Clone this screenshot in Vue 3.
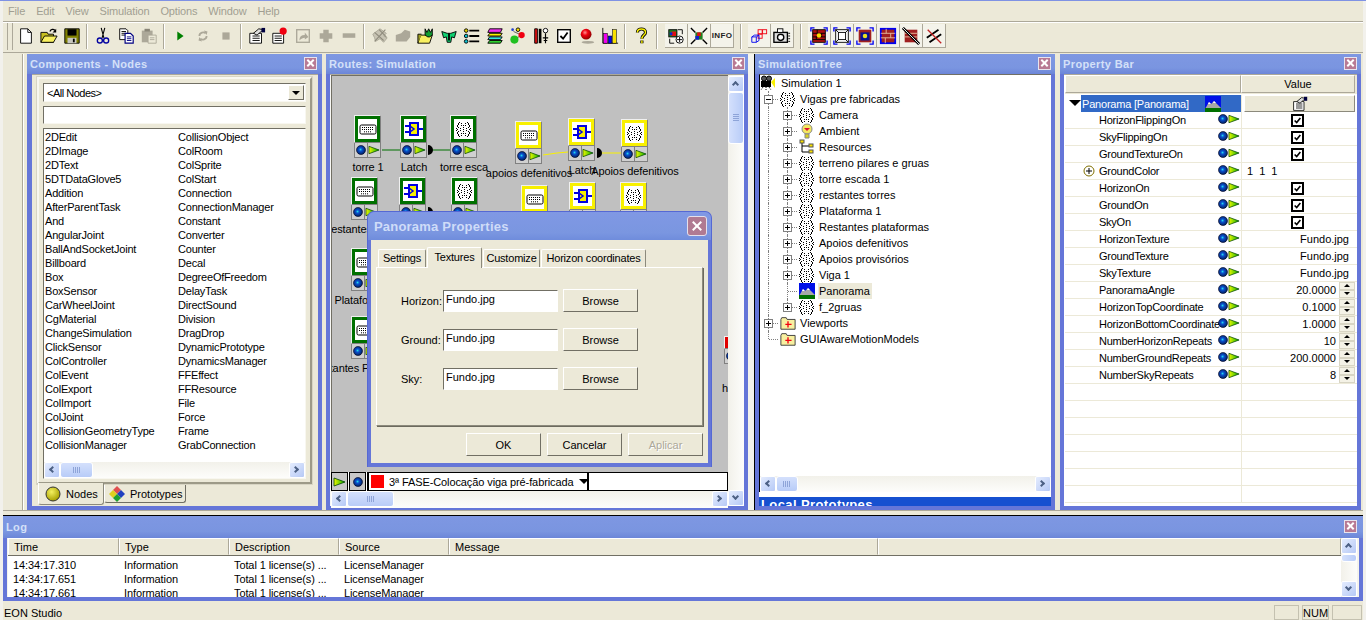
<script setup>
const menus = ['File', 'Edit', 'View', 'Simulation', 'Options', 'Window', 'Help']
const toolGroups = [
  ['new', 'open', 'save'],
  ['cut', 'copy', 'paste'],
  ['play', 'loop', 'stop'],
  ['props', 'propred', 'jump', 'plus', 'minus'],
  ['gr1', 'gr2', 'foldbug', 'bug', 'list', 'layers', 'mol', 'tune', 'check', 'redball', 'bars'],
  ['help'],
]
const raisedGroups = [
  ['wire1', 'wire2', 'info'],
  ['cube', 'cam'],
  ['r1', 'r2', 'r3', 'r4', 'r5', 'r6'],
]
const nodesA = ['2DEdit', '2DImage', '2DText', '5DTDataGlove5', 'Addition', 'AfterParentTask', 'And', 'AngularJoint', 'BallAndSocketJoint', 'Billboard', 'Box', 'BoxSensor', 'CarWheelJoint', 'CgMaterial', 'ChangeSimulation', 'ClickSensor', 'ColController', 'ColEvent', 'ColExport', 'ColImport', 'ColJoint', 'CollisionGeometryType', 'CollisionManager']
const nodesB = ['CollisionObject', 'ColRoom', 'ColSprite', 'ColStart', 'Connection', 'ConnectionManager', 'Constant', 'Converter', 'Counter', 'Decal', 'DegreeOfFreedom', 'DelayTask', 'DirectSound', 'Division', 'DragDrop', 'DynamicPrototype', 'DynamicsManager', 'FFEffect', 'FFResource', 'File', 'Force', 'Frame', 'GrabConnection']

// dotted group icon, one pixel per # on a 15x15 grid
const grpMap = [
  '...#.......#...',
  '..#..#...#..#..',
  '..#.........#..',
  '.#...#.#.#...#.',
  '.#...........#.',
  '..#....#....#..',
  '#...#.....#...#',
  '.#.....#.....#.',
  '#...#.....#...#',
  '..#....#....#..',
  '.#...........#.',
  '.#...#.#.#...#.',
  '..#.........#..',
  '..#..#...#..#..',
  '...#.......#...',
]
const grpPath = grpMap.map((row, y) => [...row].map((c, x) => (c === '#' ? `M${x} ${y}h1v1h-1z` : '')).join('')).join('')

const routeNodes = [
  { x: 354, y: 115, c: 'green', i: 'kbd', label: 'torre 1', ly: 167 },
  { x: 400, y: 115, c: 'green', i: 'latch', label: 'Latch', ly: 167 },
  { x: 450, y: 115, c: 'green', i: 'grp', label: 'torre esca', ly: 167 },
  { x: 351, y: 177, c: 'green', i: 'kbd', label: 'restantes torres', ly: 229 },
  { x: 399, y: 177, c: 'green', i: 'latch', label: '', ly: 229 },
  { x: 451, y: 177, c: 'green', i: 'grp', label: '', ly: 229 },
  { x: 351, y: 248, c: 'green', i: 'kbd', label: 'Plataforma 1', ly: 300 },
  { x: 351, y: 316, c: 'green', i: 'kbd', label: 'Restantes Plataformas', ly: 368 },
  { x: 515, y: 121, c: 'yellow', i: 'kbd', label: 'apoios defenitivos', ly: 173 },
  { x: 568, y: 118, c: 'yellow', i: 'latch', label: 'Latch', ly: 170 },
  { x: 621, y: 119, c: 'yellow', i: 'grp', label: 'Apoios defenitivos', ly: 171 },
  { x: 521, y: 185, c: 'yellow', i: 'kbd', label: '', ly: 237 },
  { x: 569, y: 182, c: 'yellow', i: 'latch', label: '', ly: 234 },
  { x: 620, y: 182, c: 'yellow', i: 'grp', label: '', ly: 234 },
  { x: 724, y: 336, c: 'red', i: 'kbd', label: '', ly: 388 },
]
const canvasX = 332
const canvasY = 76
const nodeStyle = n => ({ left: n.x - canvasX + 'px', top: n.y - canvasY + 'px' })
const labelStyle = n => ({ left: n.x + 14 - canvasX + 'px', top: n.ly - 7 - canvasY + 'px' })

const treeRows = [
  { t: 'Camera', i: 'grp', box: true },
  { t: 'Ambient', i: 'bulb', box: true },
  { t: 'Resources', i: 'res', box: true },
  { t: 'terreno pilares e gruas', i: 'grp', box: true },
  { t: 'torre escada 1', i: 'grp', box: true },
  { t: 'restantes torres', i: 'grp', box: true },
  { t: 'Plataforma 1', i: 'grp', box: true },
  { t: 'Restantes plataformas', i: 'grp', box: true },
  { t: 'Apoios defenitivos', i: 'grp', box: true },
  { t: 'Apoios provisórios', i: 'grp', box: true },
  { t: 'Viga 1', i: 'grp', box: true },
  { t: 'Panorama', i: 'pano', box: false, sel: true },
  { t: 'f_2gruas', i: 'grp', box: true, last: true },
]

const props = [
  { n: 'HorizonFlippingOn', k: 'chk' },
  { n: 'SkyFlippingOn', k: 'chk' },
  { n: 'GroundTextureOn', k: 'chk' },
  { n: 'GroundColor', k: 'txt', v: '1 1 1', plus: true },
  { n: 'HorizonOn', k: 'chk' },
  { n: 'GroundOn', k: 'chk' },
  { n: 'SkyOn', k: 'chk' },
  { n: 'HorizonTexture', k: 'file', v: 'Fundo.jpg' },
  { n: 'GroundTexture', k: 'file', v: 'Fundo.jpg' },
  { n: 'SkyTexture', k: 'file', v: 'Fundo.jpg' },
  { n: 'PanoramaAngle', k: 'num', v: '20.0000' },
  { n: 'HorizonTopCoordinate', k: 'num', v: '0.1000' },
  { n: 'HorizonBottomCoordinate', k: 'num', v: '1.0000' },
  { n: 'NumberHorizonRepeats', k: 'num', v: '10' },
  { n: 'NumberGroundRepeats', k: 'num', v: '200.0000' },
  { n: 'NumberSkyRepeats', k: 'num', v: '8' },
  {}, {}, {}, {}, {}, {}, {},
]

const logCols = ['Time', 'Type', 'Description', 'Source', 'Message']
const logRows = ['14:34:17.310', '14:34:17.651', '14:34:17.661']
const textures = ['Horizon:', 'Ground:', 'Sky:']
</script>

<template>
  <svg class="defs" width="0" height="0">
    <defs>
      <radialGradient id="ballg" cx="45%" cy="45%" r="60%">
        <stop offset="0" stop-color="#20e0e8" />
        <stop offset=".3" stop-color="#0a50d0" />
        <stop offset="1" stop-color="#001a50" />
      </radialGradient>
      <linearGradient id="arrg" x1="0" x2="1" y1="0" y2="0">
        <stop offset="0" stop-color="#f0f800" />
        <stop offset="1" stop-color="#00b000" />
      </linearGradient>
      <radialGradient id="redg" cx="40%" cy="35%" r="65%">
        <stop offset="0" stop-color="#ff9090" />
        <stop offset=".4" stop-color="#f00010" />
        <stop offset="1" stop-color="#900000" />
      </radialGradient>
      <radialGradient id="olive" cx="40%" cy="35%" r="65%">
        <stop offset="0" stop-color="#f4f060" />
        <stop offset="1" stop-color="#a8a000" />
      </radialGradient>
    </defs>
    <symbol id="ball" viewBox="0 0 10 10"><circle cx="5" cy="5" r="4.5" fill="url(#ballg)" stroke="#002" stroke-width=".6" /></symbol>
    <symbol id="arrow" viewBox="0 0 13 10"><path d="M1 1 L12 5 L1 9 Z" fill="url(#arrg)" stroke="#040" stroke-width=".8" /></symbol>
    <symbol id="kbd" viewBox="0 0 20 20"><rect x="2" y="6" width="16" height="9" rx="1.5" fill="#fff" stroke="#000" /><path d="M4 8.5h12M4 10.5h12M6 12.8h8" stroke="#000" stroke-dasharray="1 1" fill="none" /></symbol>
    <symbol id="latch" viewBox="0 0 20 20"><rect x="6" y="4" width="8" height="12" fill="#f8f000" stroke="#0000e0" stroke-width="2" /><path d="M1 7h5M1 13h5M14 10h5" stroke="#0000e0" stroke-width="2" /><path d="M6 7l4 3-4 3" fill="none" stroke="#0000e0" stroke-width="1.5" /></symbol>
    <symbol id="grp" viewBox="0 0 15 15"><path :d="grpPath" fill="#000" shape-rendering="crispEdges" /></symbol>
    <symbol id="bulb" viewBox="0 0 16 16"><circle cx="8" cy="6" r="5" fill="#f4e860" stroke="#888" /><path d="M6 11h4v4H6z" fill="#d8d020" stroke="#888" /><path d="M5 5h6L8 8z" fill="#e01030" /></symbol>
    <symbol id="res" viewBox="0 0 16 16"><path d="M3 4v9h7M3 7h7" fill="none" stroke="#000" /><rect x="1" y="1" width="4" height="3" fill="#f8e000" stroke="#555" /><rect x="10" y="5" width="4" height="3" fill="#f8e000" stroke="#555" /><rect x="10" y="11" width="4" height="3" fill="#f8e000" stroke="#555" /></symbol>
    <symbol id="pano" viewBox="0 0 16 16"><rect width="16" height="16" fill="#0010e8" /><path d="M0 13L4 6l2 2 3-3 3 3 4 4v2z" fill="#a8a8a8" /><path d="M3 8l1-2 2 2zM8 7l1-2 2 2z" fill="#fff" /><rect y="12" width="16" height="4" fill="#007000" /></symbol>
    <symbol id="folderp" viewBox="0 0 18 16"><path d="M1 4l1-2h5l1 2h9v11H1z" fill="#f8f0a0" stroke="#333" /><path d="M9 6v7M6 9.500h7" stroke="#f00010" stroke-width="1.500" /></symbol>
    <symbol id="film" viewBox="0 0 16 16"><path d="M11 7l4-4v10z" fill="#f8f000" /><rect x="1" y="6" width="10" height="6" fill="#000" /><circle cx="4" cy="3.500" r="2.500" fill="#555" stroke="#000" /><circle cx="9" cy="3.500" r="2.500" fill="#555" stroke="#000" /><path d="M3 12l-2 3M6 12v3M9 12l2 3" stroke="#000" stroke-dasharray="1 1" /></symbol>
    <symbol id="new" viewBox="0 0 20 20"><path d="M4 2h8l4 4v12H4z" fill="#fff" stroke="#000" /><path d="M12 2v4h4" fill="none" stroke="#000" /></symbol>
    <symbol id="open" viewBox="0 0 20 20"><path d="M1 17V6h7l1 2h6v9z" fill="#c8c020" stroke="#000" /><path d="M1 17l4-7h14l-4 7z" fill="#f8f060" stroke="#000" /><path d="M11 5c1-3 4-3 6-1" fill="none" stroke="#000" stroke-width="1.300" /><path d="M18 2v4h-4z" fill="#000" /></symbol>
    <symbol id="save" viewBox="0 0 20 20"><path d="M2 2h16v16H2z" fill="#808000" stroke="#000" /><rect x="5" y="2.500" width="10" height="7" fill="#000" /><rect x="5" y="12" width="10" height="6" fill="#c8c8c0" /><rect x="11" y="13" width="2" height="4" fill="#000" /></symbol>
    <symbol id="cut" viewBox="0 0 20 20"><path d="M8 1l3 11M12 1L9 12" stroke="#000" stroke-width="1.200" /><circle cx="6.500" cy="15" r="2.800" fill="none" stroke="#0000a0" stroke-width="1.500" /><circle cx="13.500" cy="15" r="2.800" fill="none" stroke="#0000a0" stroke-width="1.500" /></symbol>
    <symbol id="copy" viewBox="0 0 20 20"><path d="M3 2h7l2 2v10H3z" fill="#fff" stroke="#000" /><path d="M5 5h5M5 7h5M5 9h5" stroke="#000" /><path d="M9 7h6l3 3v8H9z" fill="#fff" stroke="#000080" stroke-width="1.300" /><path d="M11 11h5M11 13h5M11 15h5" stroke="#000080" /></symbol>
    <symbol id="paste" viewBox="0 0 20 20"><path d="M2 4h12v13H2z" fill="#aca899" /><path d="M5 2h6v3H5z" fill="#8a8678" /><path d="M9 9h9v9H9z" fill="#ece9d8" stroke="#aca899" /><path d="M11 12h5M11 14h5" stroke="#aca899" /></symbol>
    <symbol id="play" viewBox="0 0 20 20"><path d="M7 5l7 5-7 5z" fill="#008000" /></symbol>
    <symbol id="loop" viewBox="0 0 20 20"><path d="M6 10c0-4 5-5 7-3M14 10c0 4-5 5-7 3" fill="none" stroke="#aca899" stroke-width="2" /><path d="M11 4l4 1-1 4zM9 16l-4-1 1-4z" fill="#aca899" /></symbol>
    <symbol id="stop" viewBox="0 0 20 20"><rect x="6" y="6" width="8" height="8" fill="#aca899" /></symbol>
    <symbol id="props" viewBox="0 0 20 20"><path d="M2 7h13v11H2z" fill="#fff" stroke="#000" /><path d="M5 10h8M5 12.500h8M5 15h8" stroke="#000" /><path d="M6 7l6-5 5 1-7 6z" fill="#ddd" stroke="#000" /><rect x="15" y="1" width="4" height="5" fill="#000040" /></symbol>
    <symbol id="propred" viewBox="0 0 20 20"><path d="M2 7h12v11H2z" fill="#fff" stroke="#000" /><path d="M4 10h8M4 12.500h8M4 15h8" stroke="#000" /><circle cx="13.500" cy="4.500" r="4" fill="#f00010" /></symbol>
    <symbol id="jump" viewBox="0 0 20 20"><rect x="3" y="3" width="14" height="14" fill="#ece9d8" stroke="#aca899" stroke-width="1.500" /><path d="M6 15c0-4 2-6 6-6V6l4 5-4 3v-2c-2 0-4 1-6 3z" fill="#aca899" /></symbol>
    <symbol id="plus" viewBox="0 0 20 20"><path d="M7 3h6v4h4v6h-4v4H7v-4H3V7h4z" fill="#aca899" /></symbol>
    <symbol id="minus" viewBox="0 0 20 20"><rect x="3" y="7" width="14" height="5" fill="#aca899" /></symbol>
    <symbol id="gr1" viewBox="0 0 20 20"><path d="M2 8l8-6 7 5-3 3 4 2-4 5-4-4-5 3-1-4z" fill="#c8c4b4" stroke="#aca899" /><path d="M4 6l10 9M9 3l8 8M16 3L4 16" stroke="#8f8b7c" stroke-width="1.200" /></symbol>
    <symbol id="gr2" viewBox="0 0 20 20"><path d="M2 16V9l6-2 4-4 6 2v6l-4 5z" fill="#aca899" /></symbol>
    <symbol id="foldbug" viewBox="0 0 20 20"><path d="M1 18l3-9h13l-3 9z" fill="#f8f060" stroke="#000" /><path d="M1 18V8h4" fill="#a0a020" stroke="#000" /><path d="M9 2l2 4 2-4 2 4 2-4v7l-3 2h-2l-3-2z" fill="#10a030" stroke="#000" /></symbol>
    <symbol id="bug" viewBox="0 0 20 20"><path d="M2 5l6 2h4l6-2-2 7-3-1-1 6h-4l-1-6-3 1z" fill="#10d070" stroke="#000" /><path d="M10 7v8" stroke="#000" stroke-width="2" /></symbol>
    <symbol id="list" viewBox="0 0 20 20"><circle cx="3.500" cy="4" r="2" fill="#e0d000" stroke="#000" /><circle cx="3.500" cy="10" r="2" fill="#10c0d0" stroke="#000" /><circle cx="3.500" cy="16" r="2" fill="#10c0d0" stroke="#000" /><path d="M7 4h11M7 10h11M7 16h11" stroke="#000" stroke-width="2" /></symbol>
    <symbol id="layers" viewBox="0 0 20 20"><path d="M4 2h14l-2 4H2z" fill="#f030f0" stroke="#000" /><path d="M4 7h14l-2 3H2z" fill="#f8f000" stroke="#000" /><path d="M4 11h14l-2 3H2z" fill="#30e8e0" stroke="#000" /><path d="M4 15h14l-2 3H2z" fill="#30d030" stroke="#000" /></symbol>
    <symbol id="mol" viewBox="0 0 20 20"><path d="M5 5l9 4M6 14l8-5" stroke="#555" /><circle cx="6" cy="14" r="4.500" fill="#20c020" /><circle cx="14" cy="9" r="3.500" fill="#f00010" /><circle cx="10" cy="3" r="2" fill="#f8e000" stroke="#000" /><circle cx="4" cy="3" r="1.500" fill="#2040d0" /></symbol>
    <symbol id="tune" viewBox="0 0 20 20"><path d="M3 2v16h3V2z" fill="#e01010" stroke="#000" /><path d="M9 2v16" stroke="#000" stroke-width="3" /><circle cx="15" cy="4" r="2.500" fill="#fff" stroke="#000" /><path d="M15 7v11M12 12h6M13 15h4" stroke="#000" stroke-width="1.300" /></symbol>
    <symbol id="check" viewBox="0 0 20 20"><rect x="3" y="3" width="14" height="14" fill="#fff" stroke="#000" stroke-width="1.500" /><path d="M6 10l3 3 5-7" fill="none" stroke="#000" stroke-width="2" /></symbol>
    <symbol id="redball" viewBox="0 0 20 20"><ellipse cx="11" cy="17" rx="7" ry="1.500" fill="#aca899" /><circle cx="9" cy="8" r="6" fill="url(#redg)" /></symbol>
    <symbol id="bars" viewBox="0 0 20 20"><path d="M2 1v17h17" fill="none" stroke="#000" /><rect x="3" y="7" width="4" height="11" fill="#f000f0" stroke="#000" stroke-width=".6" /><rect x="8" y="10" width="4" height="8" fill="#0000f0" stroke="#000" stroke-width=".6" /><rect x="13" y="3" width="4" height="15" fill="#f8e000" stroke="#000" stroke-width=".6" /></symbol>
    <symbol id="help" viewBox="0 0 20 20"><path d="M6 6c0-5 9-5 9 0 0 3-4 3-4 7M11 15v3" fill="none" stroke="#000" stroke-width="3.500" /><path d="M6 6c0-5 9-5 9 0 0 3-4 3-4 7M11 15v3" fill="none" stroke="#f8f000" stroke-width="1.600" /></symbol>
    <symbol id="wire1" viewBox="0 0 20 20"><rect x="2" y="3" width="9" height="8" fill="#208020" stroke="#000" /><rect x="5" y="5" width="5" height="5" fill="#e01010" /><rect x="3" y="6" width="3" height="3" fill="#1020d0" /><circle cx="14" cy="14" r="4" fill="#fff" stroke="#000" /><path d="M11 14h6M14 11v6" stroke="#000" /><path d="M12 3h5v5M3 13v5h5" fill="none" stroke="#000" /></symbol>
    <symbol id="wire2" viewBox="0 0 20 20"><path d="M1 1l5 5M19 1l-5 5M1 19l5-5M19 19l-5-5" stroke="#000" stroke-width="1.500" /><rect x="6" y="6" width="8" height="8" fill="#208020" /><rect x="8" y="6" width="4" height="4" fill="#e01010" /><rect x="6" y="10" width="4" height="4" fill="#1020d0" /></symbol>
    <symbol id="cube" viewBox="0 0 20 20"><rect x="9" y="3" width="4.500" height="4.500" fill="none" stroke="#f00010" /><rect x="14" y="3" width="4.500" height="4.500" fill="none" stroke="#f00010" /><rect x="9" y="8" width="4.500" height="4.500" fill="none" stroke="#f00010" /><path d="M2 11l3-2h5v6l-3 2H2zM2 11h5v6M7 11l3-2" fill="none" stroke="#0000f0" /></symbol>
    <symbol id="cam" viewBox="0 0 20 20"><rect x="1" y="6" width="15" height="11" fill="#ddd" stroke="#000" stroke-width="1.500" /><rect x="5" y="2" width="6" height="4" fill="#fff" stroke="#000" /><circle cx="8.500" cy="11.500" r="3.500" fill="#fff" stroke="#000" stroke-width="1.500" /><path d="M17 7h2M17 10h2M17 13h2M17 16h2" stroke="#000" /></symbol>
    <symbol id="r1" viewBox="0 0 20 20"><path d="M1 5V1h4M15 1h4v4M19 15v4h-4M5 19H1v-4" fill="none" stroke="#0000f0" stroke-width="1.500" /><rect x="3" y="3" width="14" height="14" fill="#b01010" stroke="#000" /><path d="M3 7h14M3 11h14M3 14h14M8 3v4M13 7v4M7 11v3" stroke="#000" /><circle cx="10" cy="9.500" r="2.500" fill="#f8e000" /></symbol>
    <symbol id="r2" viewBox="0 0 20 20"><path d="M1 5V1h4M15 1h4v4M19 15v4h-4M5 19H1v-4" fill="none" stroke="#0000f0" stroke-width="1.500" /><rect x="3" y="3" width="14" height="14" fill="#fff" stroke="#000" /><rect x="6" y="6" width="8" height="8" fill="none" stroke="#000" /><path d="M3 3l3 3M17 3l-3 3M3 17l3-3M17 17l-3-3" stroke="#000" /></symbol>
    <symbol id="r3" viewBox="0 0 20 20"><path d="M1 5V1h4M15 1h4v4M19 15v4h-4M5 19H1v-4" fill="none" stroke="#0000f0" stroke-width="1.500" /><rect x="3" y="3" width="14" height="14" fill="#a02020" /><rect x="5" y="6" width="10" height="9" fill="#0a1090" /><circle cx="10" cy="10" r="2.500" fill="#e8e020" /></symbol>
    <symbol id="r4" viewBox="0 0 20 20"><rect x="2" y="2" width="16" height="16" fill="#a02020" stroke="#0000f0" stroke-width="2" /><path d="M2 7h16M2 12h16M8 2v5M13 7v5M7 12v6" stroke="#e8c0a0" /></symbol>
    <symbol id="r5" viewBox="0 0 20 20"><rect x="3" y="3" width="14" height="14" fill="#a02020" /><path d="M3 7h14M3 11h14" stroke="#e8c0a0" /><path d="M1 1l18 18" stroke="#000" stroke-width="3" /><path d="M1 1l18 18" stroke="#fff" /></symbol>
    <symbol id="r6" viewBox="0 0 20 20"><path d="M2 12L15 3M5 17l13-9" stroke="#000" stroke-width="2" /><path d="M3 3l15 15" stroke="#c02020" stroke-width="1.500" /></symbol>
    <symbol id="box" viewBox="0 0 9 9"><rect x=".5" y=".5" width="8" height="8" fill="#fff" stroke="#808080" /></symbol>
  </svg>

  <div class="app">
    <div class="frame">
      <div class="menubar">
        <span v-for="m in menus" :key="m">{{ m }}</span>
      </div>

      <div class="toolbar">
        <div class="grip"></div>
        <template v-for="(g, gi) in toolGroups" :key="gi">
          <span v-if="gi" class="sep"></span>
          <span v-for="t in g" :key="t" class="tool"><svg width="18" height="18"><use :href="'#' + t" /></svg></span>
        </template>
        <span class="sep big"></span>
        <template v-for="(g, gi) in raisedGroups" :key="'r' + gi">
          <span v-if="gi" class="sep wide"></span>
          <span v-for="t in g" :key="t" class="tool raised">
            <b v-if="t === 'info'" class="info">INFO</b>
            <svg v-else width="18" height="18"><use :href="'#' + t" /></svg>
          </span>
        </template>
      </div>

      <div class="workspace">
        <div class="gutter"></div>

        <section class="panel components">
          <header class="ptitle"><span>Components - Nodes</span><i class="close"></i></header>
          <div class="pbody comp-body">
            <div class="comp-box">
              <div class="combo"><span>&lt;All Nodes&gt;</span><i class="combo-btn"></i></div>
              <div class="filter"></div>
              <div class="nodelist">
                <div class="cols">
                  <ul><li v-for="n in nodesA" :key="n">{{ n }}</li></ul>
                  <ul><li v-for="n in nodesB" :key="n">{{ n }}</li></ul>
                </div>
                <div class="hscroll">
                  <i class="sb-btn left"></i><i class="sb-thumb" style="width: 33px"></i><em></em><i class="sb-btn right"></i>
                </div>
              </div>
            </div>
            <div class="comp-tabs">
              <span class="ctab on">
                <svg width="16" height="16" viewBox="0 0 16 16"><circle cx="8" cy="8" r="7" fill="url(#olive)" stroke="#333" /></svg>Nodes
              </span>
              <span class="ctab">
                <svg width="16" height="16" viewBox="0 0 16 16"><path d="M8 0l4 4-4 4-4-4z" fill="#e05050" /><path d="M12 4l4 4-4 4-4-4z" fill="#2040c0" /><path d="M4 4l4 4-4 4-4-4z" fill="#e0d020" /><path d="M8 8l4 4-4 4-4-4z" fill="#20a030" /></svg>Prototypes
              </span>
            </div>
          </div>
        </section>

        <section class="panel routes">
          <header class="ptitle"><span>Routes: Simulation</span><i class="close"></i></header>
          <div class="routes-body">
            <div class="routes-main">
              <div class="canvas">
                <svg class="wires" width="397" height="397">
                  <path d="M51 75H69M101 75H119" stroke="#007000" fill="none" />
                  <path d="M212 80L226 78L237 77M266 78H290" stroke="#f8f000" fill="none" />
                  <path d="M97 70a5 5 0 0 1 0 10zM266 73a5 5 0 0 1 0 10zM97 132a5 5 0 0 1 0 10z" fill="#000" />
                </svg>
                <div v-for="(n, i) in routeNodes" :key="i" class="rnode" :style="nodeStyle(n)">
                  <div class="rtop" :class="n.c">
                    <svg :width="n.i === 'grp' ? 15 : 20" :height="n.i === 'grp' ? 15 : 20"><use :href="'#' + n.i" /></svg>
                  </div>
                  <div class="rports">
                    <span><svg width="10" height="10"><use href="#ball" /></svg></span>
                    <span><svg width="12" height="10"><use href="#arrow" /></svg></span>
                  </div>
                </div>
                <span v-for="(n, i) in routeNodes.filter(r => r.label)" :key="'l' + i" class="rlabel" :style="labelStyle(n)">{{ n.label }}</span>
                <span class="rlabel cut">h</span>
              </div>
              <div class="simbar">
                <span class="sq"><svg width="13" height="10"><use href="#arrow" /></svg></span>
                <span class="sq"><svg width="10" height="10"><use href="#ball" /></svg></span>
                <div class="simcombo"><i class="red"></i><span>3ª FASE-Colocação viga pré-fabricada</span><i class="tri"></i></div>
                <div class="simrest"></div>
              </div>
              <div class="hscroll tall">
                <i class="sb-btn left"></i><i class="sb-thumb" style="width: 47px"></i><em></em><i class="sb-btn right"></i>
              </div>
            </div>
            <div class="vscroll">
              <i class="sb-btn up"></i><i class="sb-vthumb" style="height: 52px"></i><em></em><i class="sb-btn down"></i>
            </div>
          </div>

          <div class="dialog">
            <header class="dtitle"><span>Panorama Properties</span><i class="dclose"></i></header>
            <div class="dbody">
              <div class="tabs">
                <span class="tab">Settings</span>
                <span class="tab on">Textures</span>
                <span class="tab">Customize</span>
                <span class="tab">Horizon coordinates</span>
              </div>
              <div class="tabpane">
                <div v-for="t in textures" :key="t" class="texrow">
                  <label>{{ t }}</label>
                  <div class="input">Fundo.jpg</div>
                  <button class="btn browse">Browse</button>
                </div>
              </div>
              <div class="dactions">
                <button class="btn">OK</button>
                <button class="btn">Cancelar</button>
                <button class="btn off">Aplicar</button>
              </div>
            </div>
          </div>
        </section>

        <div class="splitter"></div>

        <section class="panel tree">
          <header class="ptitle"><span>SimulationTree</span><i class="close"></i></header>
          <div class="tree-body">
            <div class="treebox">
              <div class="trows">
                <div class="trow root">
                  <svg width="16" height="16"><use href="#film" /></svg><span class="ttext">Simulation 1</span>
                </div>
                <div class="trow">
                  <span class="cell line"><svg class="tbox" width="9" height="9"><use href="#box" /></svg><b class="h"></b></span>
                  <svg class="ticon g15" width="15" height="15"><use href="#grp" /></svg><span class="ttext">Vigas pre fabricadas</span>
                </div>
                <div v-for="r in treeRows" :key="r.t" class="trow">
                  <span class="cell vline"></span>
                  <span class="cell line" :class="{ lastc: r.last }">
                    <template v-if="r.box">
                      <svg class="tbox" width="9" height="9"><use href="#box" /></svg><b class="h v"></b>
                    </template>
                  </span>
                  <svg v-if="r.i === 'grp'" class="ticon g15" width="15" height="15"><use href="#grp" /></svg>
                  <svg v-else class="ticon" width="16" height="16"><use :href="'#' + r.i" /></svg>
                  <span class="ttext" :class="{ sel: r.sel }">{{ r.t }}</span>
                </div>
                <div class="trow">
                  <span class="cell line"><svg class="tbox" width="9" height="9"><use href="#box" /></svg><b class="h v"></b></span>
                  <svg class="ticon" width="16" height="16"><use href="#folderp" /></svg><span class="ttext">Viewports</span>
                </div>
                <div class="trow">
                  <span class="cell line lastc"></span>
                  <svg class="ticon" width="16" height="16"><use href="#folderp" /></svg><span class="ttext">GUIAwareMotionModels</span>
                </div>
              </div>
              <div class="hscroll tree-h">
                <i class="sb-btn left"></i><i class="sb-thumb" style="width: 22px"></i><em></em><i class="sb-btn right"></i>
              </div>
            </div>
            <div class="localproto">Local Prototypes</div>
          </div>
        </section>

        <section class="panel propbar">
          <header class="ptitle"><span>Property Bar</span><i class="close"></i></header>
          <div class="prop-body">
            <div class="phead"><span></span><span>Value</span></div>
            <div class="prow top">
              <div class="pname">
                <i class="droptri"></i>
                <span class="pselected"><span>Panorama [Panorama]</span><svg width="16" height="16"><use href="#pano" /></svg></span>
              </div>
              <div class="pval"><span class="pvbtn"><svg width="16" height="16"><use href="#props" /></svg></span></div>
            </div>
            <div v-for="(p, i) in props" :key="i" class="prow">
              <div class="pname">
                <template v-if="p.n">
                  <svg v-if="p.plus" class="pplus" width="12" height="12" viewBox="0 0 12 12"><circle cx="6" cy="6" r="5" fill="none" stroke="#807000" /><path d="M3 6h6M6 3v6" stroke="#000" /></svg>
                  <span class="pn">{{ p.n }}</span>
                  <svg class="pball" width="10" height="10"><use href="#ball" /></svg>
                  <svg class="parr" width="12" height="10"><use href="#arrow" /></svg>
                </template>
              </div>
              <div class="pval" :class="p.k">
                <span v-if="p.k === 'chk'" class="cb"><svg width="9" height="9" viewBox="0 0 11 11"><path d="M2 5.500l2.500 2.500L9 2.500" fill="none" stroke="#000" stroke-width="2" /></svg></span>
                <template v-else-if="p.k">
                  <span class="vtext">{{ p.v }}</span>
                  <span v-if="p.k === 'num'" class="spin"><i class="su"></i><i class="sd"></i></span>
                </template>
              </div>
            </div>
          </div>
        </section>
      </div>

      <section class="logpanel">
        <header class="ptitle log-title"><span>Log</span><i class="close"></i></header>
        <div class="log-body">
          <div class="log-table">
            <div class="lhead">
              <span v-for="c in logCols" :key="c" :class="{ msg: c === 'Message' }">{{ c }}</span>
              <span class="rest"></span>
            </div>
            <div class="lrows">
              <div v-for="r in logRows" :key="r" class="lrow">
                <span>{{ r }}</span><span>Information</span><span>Total 1 license(s) ...</span><span>LicenseManager</span>
              </div>
            </div>
          </div>
          <div class="vscroll logv">
            <i class="sb-btn up"></i><i class="sb-vthumb" style="height: 8px"></i><em></em><i class="sb-btn down"></i>
          </div>
        </div>
      </section>

      <footer class="status">
        <span class="stext">EON Studio</span>
        <span class="sbox"></span>
        <span class="sbox num">NUM</span>
        <span class="sbox last"></span>
      </footer>
    </div>
  </div>
</template>

<style>
html, body { margin: 0; overflow: hidden; }
</style>

<style scoped>
.defs { position: absolute; }
.app { width: 1366px; height: 620px; overflow: hidden; background: #f2f1ec; padding: 0 3px; box-sizing: border-box; border-top: 1px solid #7f92e4; font: 11px "Liberation Sans", Arial, sans-serif; color: #000; }
.frame { background: #ece9d8; height: 619px; display: flex; flex-direction: column; }
i { display: block; font-style: normal; }
ul { list-style: none; margin: 0; padding: 0; }

.menubar { display: flex; gap: 11px; align-items: center; padding: 0 0 1px 5px; box-sizing: content-box; margin-bottom: -1px; height: 19px; color: #a19f92; border-bottom: 1px solid #aca899; box-shadow: 0 1px 0 #fff; letter-spacing: -.15px; flex: none; }
.toolbar { height: 30px; flex: none; margin-top: 2px; display: flex; align-items: center; border-bottom: 1px solid #aca899; box-sizing: border-box; padding-bottom: 3px; position: relative; }
.grip { width: 4px; height: 27px; margin: 0 1px 0 4px; border-left: 1px solid #aca899; border-right: 1px solid #aca899; flex: none; }
.tool { width: 23px; height: 24px; display: flex; align-items: center; justify-content: center; flex: none; }
.tool svg { display: block; }
.tool.raised { background: #f4f3ea; border-right: 1px solid #aca899; border-bottom: 1px solid #aca899; box-sizing: border-box; }
.info { font: bold 8px "Liberation Sans", sans-serif; letter-spacing: .3px; color: #222; }
.sep { width: 1px; height: 25px; background: #aca899; border-right: 1px solid #fff; margin: 0 3px; flex: none; }
.sep.big { margin: 0 7px 0 4px; }
.sep.wide { margin: 0 6px; }

.workspace { height: 461px; flex: none; display: flex; margin-top: 1px; background: linear-gradient(#aca899, #aca899) 0 456px / 100% 1px no-repeat; }
.gutter { width: 24px; flex: none; box-sizing: border-box; position: relative; }
.gutter::after { content: ""; position: absolute; left: 19px; top: 0; height: 456px; width: 1px; background: #aca899; border-right: 1px solid #fff; }
.panel { background: #6576d8; padding: 0 4px 4px; box-sizing: border-box; display: flex; flex-direction: column; position: relative; height: 456px; flex: none; }
.ptitle { height: 20px; margin: 0 -4px; padding: 0 4px 1px 3px; flex: none; display: flex; align-items: center; justify-content: space-between; background: linear-gradient(#7e97e2, #7a95e0 70%, #6c86d8); color: #d4e0f8; font-weight: bold; letter-spacing: .38px; box-sizing: border-box; }
.close { width: 13px; height: 13px; box-sizing: border-box; border: 1px solid #e8e4ee; background: #b87a94; position: relative; }
.close::before, .close::after { content: ""; position: absolute; left: 1px; top: 4px; width: 9px; height: 2px; background: #fff; transform: rotate(45deg); }
.close::after { transform: rotate(-45deg); }

.components { width: 295px; margin-right: 4px; }
.components .ptitle { padding-right: 5px; }
.comp-body { flex: 1; background: #ece9d8; padding: 2px 6px 0 5px; margin-left: 1px; display: flex; flex-direction: column; min-height: 0; border-top: 1px solid #aca899; }
.comp-box { border: 2px solid #9d9a88; border-left-color: #f8f7f0; border-top-color: #f8f7f0; padding: 4px 4px 3px; height: 407px; box-sizing: border-box; display: flex; flex-direction: column; box-shadow: 0 0 0 1px #d8d5c4; flex: none; }
.combo { height: 19px; border: 1px solid #716f64; border-right-color: #f8f7f0; border-bottom-color: #f8f7f0; background: #fff; display: flex; align-items: center; justify-content: space-between; box-sizing: border-box; padding: 0 1px 0 3px; letter-spacing: -.5px; flex: none; }
.combo-btn { width: 16px; height: 15px; background: #ece9d8; border: 1px solid; border-color: #fff #716f64 #716f64 #fff; box-sizing: border-box; position: relative; }
.combo-btn::after { content: ""; position: absolute; left: 3px; top: 5px; border: 4px solid transparent; border-top-color: #000; border-bottom: 0; }
.filter { height: 18px; margin-top: 4px; border: 1px solid #716f64; border-right-color: #f8f7f0; border-bottom-color: #f8f7f0; background: #fff; box-sizing: border-box; flex: none; }
.nodelist { margin-top: 4px; flex: 1; min-height: 0; background: #fff; border: 1px solid #716f64; border-right-color: #f8f7f0; border-bottom-color: #f8f7f0; display: flex; flex-direction: column; }
.cols { flex: 1; display: flex; padding: 1px 0 0 1px; overflow: hidden; letter-spacing: -.2px; }
.cols ul { width: 133px; flex: none; }
.cols li { height: 14px; line-height: 14px; white-space: nowrap; }

.hscroll { height: 16px; flex: none; display: flex; background: linear-gradient(#f2f1ea, #fdfdfb); }
.hscroll em, .vscroll em { flex: 1; display: block; }
.hscroll.tall { height: 17px; }
.sb-btn { width: 16px; height: 16px; flex: none; border: 1px solid #fff; box-sizing: border-box; border-radius: 2px; background: linear-gradient(135deg, #e4ecfe, #b6c9f6); position: relative; }
.sb-btn::after { content: ""; position: absolute; left: 4px; top: 4px; width: 5px; height: 5px; box-sizing: border-box; border-left: 2px solid #4d6185; border-top: 2px solid #4d6185; }
.sb-btn.left::after { transform: rotate(-45deg); left: 5px; }
.sb-btn.right::after { transform: rotate(135deg); left: 3px; }
.sb-btn.up::after { transform: rotate(45deg); top: 5px; }
.sb-btn.down::after { transform: rotate(-135deg); top: 3px; }
.sb-thumb { height: 16px; flex: none; box-sizing: border-box; border: 1px solid #fff; border-radius: 3px; background: linear-gradient(#d4e0fc, #b8ccf8); position: relative; }
.sb-thumb::after { content: ""; position: absolute; left: calc(50% - 4px); top: 4px; width: 8px; height: 6px; background: repeating-linear-gradient(90deg, #8ea4d8 0 1px, transparent 1px 2px); }
.sb-vthumb { width: 16px; flex: none; box-sizing: border-box; border: 1px solid #fff; border-radius: 3px; background: linear-gradient(90deg, #d4e0fc, #b8ccf8); position: relative; }
.sb-vthumb::after { content: ""; position: absolute; left: 4px; top: calc(50% - 4px); width: 6px; height: 8px; background: repeating-linear-gradient(#8ea4d8 0 1px, transparent 1px 2px); }
.logv .sb-vthumb::after { display: none; }
.vscroll { width: 16px; flex: none; display: flex; flex-direction: column; background: linear-gradient(90deg, #f2f1ea, #fdfdfb); }

.comp-tabs { display: flex; padding-left: 1px; align-items: flex-start; }
.ctab { height: 18px; width: 82px; display: flex; align-items: center; gap: 5px; padding: 0 0 0 4px; border: 1px solid #716f64; border-top: none; border-left-color: #fff; border-radius: 0 0 3px 3px; margin-top: 1px; box-sizing: border-box; flex: none; }
.ctab.on { height: 22px; margin-top: -1px; background: #ece9d8; border-color: #fff #8c8a7c #8c8a7c #fff; padding-left: 6px; width: 66px; }

.routes { width: 422px; }
.routes .ptitle { padding-right: 3px; }
.routes-body { flex: 1; display: flex; min-height: 0; background: #f8f8f4; border-top: 1px solid #aca899; padding-left: 1px; }
.routes-main { width: 397px; display: flex; flex-direction: column; flex: none; }
.canvas { height: 397px; background: #c0c0c0; position: relative; overflow: hidden; flex: none; border-top: 1px solid #716f64; border-left: 1px solid #716f64; box-sizing: border-box; }
.wires { position: absolute; left: -1px; top: -1px; }
.rnode { position: absolute; width: 27px; }
.rtop { width: 27px; height: 28px; box-sizing: border-box; border: 1px solid #808080; border-color: #f0f0f0 #808080 #808080 #f0f0f0; background: #fff; display: flex; align-items: center; justify-content: center; position: relative; }
.rtop::before { content: ""; position: absolute; inset: 0; border: 3px solid; }
.rtop.green::before { border-color: #007000; }
.rtop.yellow::before { border-color: #f8f000; }
.rtop.red::before { border-color: #e00000; }
.rports { display: flex; height: 14px; background: #d0d0d0; border: 1px solid #808080; border-top: 0; box-sizing: content-box; width: 25px; }
.rports span { width: 12px; display: flex; align-items: center; justify-content: center; border-right: 1px solid #808080; }
.rports span:last-child { border: 0; }
.rlabel { position: absolute; transform: translateX(-50%); white-space: nowrap; line-height: 14px; letter-spacing: -.1px; }
.rlabel.cut { left: 390px; top: 305px; transform: none; }

.simbar { height: 19px; flex: none; display: flex; background: #fff; }
.sq { width: 15px; height: 17px; background: #c8c8c8; border: 1px solid #000; margin-right: 1px; display: flex; align-items: center; justify-content: center; box-sizing: content-box; flex: none; }
.simcombo { width: 216px; height: 17px; border: 1px solid #000; border-width: 1px 2px; box-sizing: content-box; display: flex; align-items: center; gap: 5px; padding-left: 2px; background: #fff; flex: none; letter-spacing: -.1px; }
.red { width: 13px; height: 13px; background: #f00; flex: none; }
.simcombo span { white-space: nowrap; flex: 1; }
.tri { border: 5px solid transparent; border-top-color: #000; border-bottom: 0; margin: 0 3px 0 0; flex: none; }
.simrest { flex: 1; height: 17px; border: 1px solid #000; border-left: 0; }
.routes-body > .vscroll { height: 100%; padding-top: 1px; box-sizing: border-box; }

.dialog { position: absolute; left: 41px; top: 157px; width: 345px; height: 256px; box-sizing: border-box; background: #6576d8; border-radius: 7px 7px 0 0; padding: 0 3px 4px; display: flex; flex-direction: column; z-index: 5; border: 1px solid #5568d4; border-bottom: 0; }
.dtitle { height: 28px; flex: none; margin: 0 -3px; padding: 0 4px 0 6px; display: flex; align-items: center; justify-content: space-between; background: linear-gradient(#8098e4, #7a96e0 75%, #6f8cdc); border-radius: 6px 6px 0 0; font: bold 13px "Liberation Sans", sans-serif; letter-spacing: .2px; color: #cfdcf8; }
.dclose { width: 20px; height: 20px; box-sizing: border-box; border: 1px solid #e4e0ec; border-radius: 3px; background: #b07a92; position: relative; }
.dclose::before, .dclose::after { content: ""; position: absolute; left: 3px; top: 8px; width: 12px; height: 2px; background: #fff; transform: rotate(45deg); }
.dclose::after { transform: rotate(-45deg); }
.dbody { flex: 1; background: #ece9d8; padding: 6px 5px 0; display: flex; flex-direction: column; }
.tabs { display: flex; height: 21px; align-items: flex-end; padding-left: 2px; gap: 1px; position: relative; z-index: 1; flex: none; }
.tab { height: 18px; line-height: 17px; text-align: center; width: 48px; border: 1px solid; border-color: #fff #8c8a7c transparent #fff; border-bottom: 0; border-radius: 2px 2px 0 0; box-sizing: border-box; white-space: nowrap; flex: none; letter-spacing: -.2px; }
.tab:nth-child(2) { width: 55px; }
.tab:nth-child(3) { width: 57px; }
.tab:nth-child(4) { width: 105px; }
.tab.on { height: 21px; line-height: 18px; background: #ece9d8; margin-bottom: -1px; }
.tabpane { height: 159px; flex: none; box-sizing: border-box; border: 1px solid; border-color: #fff #8c8a7c #8c8a7c #fff; box-shadow: 1px 1px 0 #6c6a5e; padding-top: 21px; display: flex; flex-direction: column; gap: 16px; }
.texrow { display: flex; align-items: center; padding-left: 24px; height: 23px; }
.texrow label { width: 42px; flex: none; }
.input { width: 115px; height: 22px; box-sizing: border-box; background: #fff; border: 1px solid; border-color: #716f64 #fff #fff #716f64; padding: 2px 2px; flex: none; }
.btn { width: 75px; height: 23px; padding: 0; font: 11px "Liberation Sans", sans-serif; background: #ece9d8; border: 1px solid; border-color: #fff #716f64 #716f64 #fff; color: #000; flex: none; }
.browse { margin-left: 5px; }
.btn.off { color: #aca899; text-shadow: 1px 1px 0 #fff; }
.dactions { display: flex; justify-content: flex-end; gap: 6px; margin-top: 7px; }

.splitter { width: 7px; flex: none; height: 456px; box-sizing: border-box; border-right: 1px solid #000; background: #f4f3ec; }
.tree { width: 300px; margin-right: 5px; }
.tree-body { flex: 1; display: flex; flex-direction: column; background: #fff; min-height: 0; overflow: hidden; }
.treebox { height: 418px; flex: none; display: flex; flex-direction: column; border-top: 1px solid #716f64; border-left: 1px solid #000; box-sizing: border-box; }
.trows { flex: 1; margin-left: -1px; }
.trow { height: 16px; display: flex; align-items: center; white-space: nowrap; }
.trow.root { padding-left: 1px; }
.trow.root .ttext { margin-left: 4px; }
.cell { width: 19px; height: 16px; position: relative; flex: none; }
.vline::before, .line::before { content: ""; position: absolute; left: 9px; top: 0; bottom: 0; border-left: 1px dotted #808080; }
.line::after { content: ""; position: absolute; left: 10px; top: 8px; width: 9px; border-top: 1px dotted #808080; }
.lastc::before { bottom: 8px; }
.tbox { position: absolute; left: 5px; top: 4px; z-index: 1; }
.h { position: absolute; left: 7px; top: 8px; width: 5px; height: 1px; background: #000; z-index: 2; }
.h.v::after { content: ""; position: absolute; left: 2px; top: -2px; width: 1px; height: 5px; background: #000; }
.ticon { margin-left: 2px; flex: none; }
.ticon.g15 { margin-right: 1px; }
.ttext { margin-left: 3px; padding: 0 2px 0 1px; height: 16px; line-height: 16px; }
.ttext.sel { background: #ece9d8; }
.tree-h { height: 16px; }
.localproto { margin-top: 5px; background: #1650d0; color: #fff; font: bold 13px/16px "Liberation Sans", sans-serif; padding-left: 2px; letter-spacing: .4px; }

.propbar { width: 301px; }
.prop-body { flex: 1; background: #fff; overflow: hidden; min-height: 0; padding-left: 1px; border-top: 1px solid #aca899; }
.phead { height: 18px; display: grid; grid-template-columns: 176px 114px; background: #ece9d8; border-bottom: 1px solid #ece9d8; }
.phead span { border: 1px solid; border-color: #fff #aca899 #aca899 #fff; text-align: center; line-height: 16px; }
.prow { height: 17px; display: grid; grid-template-columns: 177px 113px; box-sizing: border-box; border-bottom: 1px solid #ece9d8; }
.prow.top { border: 0; margin-top: 1px; }
.pname { display: flex; align-items: center; position: relative; border-right: 1px solid #ece9d8; }
.droptri { position: absolute; left: 4px; top: 5px; border: 6px solid transparent; border-top-color: #000; border-bottom: 0; }
.pselected { margin-left: 16px; width: 160px; height: 17px; background: #3169c6; color: #fff; display: flex; align-items: center; justify-content: space-between; padding: 0 20px 0 1px; box-sizing: border-box; letter-spacing: -.2px; white-space: nowrap; }
.pselected svg { flex: none; }
.pn { position: absolute; left: 34px; white-space: nowrap; letter-spacing: -.25px; }
.pplus { position: absolute; left: 18px; top: 2px; }
.pball { position: absolute; left: 153px; top: 2px; }
.parr { position: absolute; left: 163px; top: 2px; }
.pval { display: flex; align-items: center; justify-content: flex-end; position: relative; }
.pvbtn { margin-left: 2px; width: 100%; height: 17px; background: #ece9d8; border: 1px solid; border-color: #fff #8c8a7c #8c8a7c #fff; display: flex; align-items: center; justify-content: center; box-sizing: border-box; }
.pval.chk { justify-content: center; padding-right: 2px; box-sizing: border-box; }
.cb { width: 13px; height: 13px; box-sizing: border-box; border: 2px solid #000; background: #fff; display: flex; align-items: center; justify-content: center; }
.pval.txt { justify-content: flex-start; }
.pval.txt .vtext { margin-left: 5px; letter-spacing: 1.500px; }
.pval.file .vtext { margin-right: 6px; }
.pval.num .vtext { margin-right: 1px; }
.spin { width: 16px; height: 16px; display: flex; flex-direction: column; background: #ece9d8; margin-left: 2px; flex: none; }
.spin i { height: 8px; box-sizing: border-box; position: relative; background: #f4f2e6; border: 1px solid #d8d5c4; }
.spin .su::after, .spin .sd::after { content: ""; position: absolute; left: 4px; top: 1px; border: 3px solid transparent; }
.spin .su::after { border-bottom-color: #000; border-top: 0; }
.spin .sd::after { border-top-color: #000; border-bottom: 0; }

.logpanel { height: 81px; flex: none; background: #6576d8; border-top: 1px solid #000; padding: 0 4px 4px; box-sizing: content-box; display: flex; flex-direction: column; overflow: hidden; }
.log-title { height: 22px; margin: 0 -4px; padding: 0 6px 1px 3px; }
.log-body { flex: 1; display: flex; min-height: 0; padding: 0 2px 0 1px; background: #f4f3ec; }
.log-table { flex: 1; background: #fff; min-width: 0; overflow: hidden; }
.lhead { height: 17px; display: flex; background: #ece9d8; border-bottom: 1px solid #716f64; box-sizing: content-box; }
.lhead span { width: 110px; box-sizing: border-box; border: 1px solid; border-color: #fff #aca899 transparent #fff; padding-left: 5px; line-height: 16px; flex: none; }
.lhead span:first-child { width: 111px; }
.lhead .msg { width: 429px; }
.lhead .rest { flex: 1; }
.lrows { padding-top: 2px; }
.lrow { height: 14px; display: flex; line-height: 14px; letter-spacing: -.1px; }
.lrow span { width: 110px; padding-left: 5px; box-sizing: border-box; white-space: nowrap; overflow: hidden; flex: none; }
.lrow span:first-child { width: 111px; }
.logv { background: linear-gradient(90deg, #f2f1ea, #fdfdfb); }

.status { height: 19px; flex: none; display: flex; align-items: flex-end; gap: 3px; box-sizing: border-box; padding-right: 1px; }
.stext { flex: 1; padding-left: 1px; line-height: 14px; }
.sbox { width: 25px; height: 15px; box-sizing: border-box; border: 1px solid #c4c1b0; text-align: center; line-height: 14px; }
.sbox.num { width: 27px; }
.sbox.last { width: 30px; }
</style>
